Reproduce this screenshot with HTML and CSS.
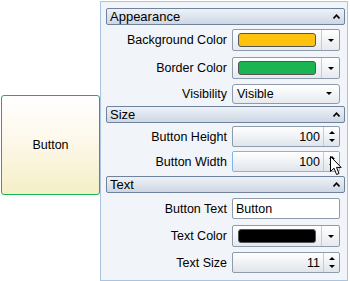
FILE: index.html
```html
<!DOCTYPE html>
<html lang="en">

<head>
    <meta charset="UTF-8">
    <title>Property Grid</title>
    <link rel="stylesheet" href="styles.css">
</head>

<body>
    <div class="stage">
        <div class="preview-col">
            <div class="preview">Button</div>
        </div>

        <div class="grid">
            <div class="group-header">
                <span>Appearance</span>
                <svg class="chevron" width="7" height="5" viewBox="0 0 7 5"><polyline points="0.5,4.5 3.5,1.2 6.5,4.5" fill="none" stroke="#000" stroke-width="1.6"/></svg>
            </div>
            <div class="row tall">
                <label>Background Color</label>
                <div class="combo color-combo">
                    <span class="swatch" style="background:#fdc20e"></span>
                    <span class="drop"><i class="tri-down"></i></span>
                </div>
            </div>
            <div class="row tall">
                <label>Border Color</label>
                <div class="combo color-combo">
                    <span class="swatch" style="background:#1ab552"></span>
                    <span class="drop"><i class="tri-down"></i></span>
                </div>
            </div>
            <div class="row short">
                <label>Visibility</label>
                <div class="combo select-combo">
                    <span class="value">Visible</span>
                    <i class="tri-down"></i>
                </div>
            </div>

            <div class="group-header">
                <span>Size</span>
                <svg class="chevron" width="7" height="5" viewBox="0 0 7 5"><polyline points="0.5,4.5 3.5,1.2 6.5,4.5" fill="none" stroke="#000" stroke-width="1.6"/></svg>
            </div>
            <div class="row">
                <label>Button Height</label>
                <div class="spin">
                    <span class="num">100</span>
                    <span class="spin-btns"><i class="tri-up"></i><i class="tri-down"></i></span>
                </div>
            </div>
            <div class="row">
                <label>Button Width</label>
                <div class="spin focused">
                    <span class="num">100</span>
                    <span class="spin-btns"><i class="tri-up"></i><i class="tri-down"></i></span>
                </div>
            </div>

            <div class="group-header text-group">
                <span>Text</span>
                <svg class="chevron" width="7" height="5" viewBox="0 0 7 5"><polyline points="0.5,4.5 3.5,1.2 6.5,4.5" fill="none" stroke="#000" stroke-width="1.6"/></svg>
            </div>
            <div class="row text-first">
                <label>Button Text</label>
                <div class="textbox">Button</div>
            </div>
            <div class="row wide">
                <label>Text Color</label>
                <div class="combo color-combo">
                    <span class="swatch" style="background:#000"></span>
                    <span class="drop"><i class="tri-down"></i></span>
                </div>
            </div>
            <div class="row short">
                <label>Text Size</label>
                <div class="spin">
                    <span class="num">11</span>
                    <span class="spin-btns"><i class="tri-up"></i><i class="tri-down"></i></span>
                </div>
            </div>

            <svg class="cursor" width="13" height="20" viewBox="0 0 13 20">
                <path d="M0.5,0.5 L0.5,15.5 L4,12.2 L6.6,18.5 L9,17.5 L6.5,11.4 L11.2,11.4 Z" fill="#fff" stroke="#000" stroke-width="1" stroke-linejoin="miter"/>
            </svg>
        </div>
    </div>
</body>

</html>
```

FILE: styles.css
```css
body {
    margin: 0;
    background: #fff;
    font-family: "Liberation Sans", Arial, sans-serif;
    font-size: 12.5px;
    color: #000;
}

.stage {
    display: flex;
    width: 350px;
    height: 281px;
}

.preview-col {
    padding-top: 95px;
    padding-left: 1px;
}

.preview {
    width: 99px;
    height: 100px;
    box-sizing: border-box;
    border: 1px solid #17b552;
    border-radius: 3px;
    background: linear-gradient(#ffffff 0%, #fdf8ea 45%, #f4efc6 100%);
    display: flex;
    align-items: center;
    justify-content: center;
}

.grid {
    position: relative;
    width: 248px;
    height: 280px;
    margin-top: 1px;
    box-sizing: border-box;
    border: 1px solid #a9c3e0;
    background: #f1f4f8;
    padding: 6px 2px 0 5px;
    display: flex;
    flex-direction: column;
}

.group-header {
    height: 17px;
    box-sizing: border-box;
    border: 1px solid #6f839c;
    border-radius: 2px;
    background: linear-gradient(#eef2f7, #cdd7e3);
    display: flex;
    align-items: center;
    justify-content: space-between;
    padding: 0 4px 0 3px;
    font-size: 13px;
}

.chevron {
    margin-bottom: 1px;
}

.row {
    height: 25px;
    display: grid;
    grid-template-columns: 1fr 108px;
    column-gap: 5px;
    align-items: center;
    padding-right: 5px;
}

.row.tall {
    height: 28px;
}

.row.short {
    height: 23px;
}

.row.wide {
    height: 30px;
}

.group-header + .row {
    margin-top: 1px;
}

.row + .group-header {
    margin-top: 1px;
}

.row + .text-group {
    margin-top: 2px;
}

.group-header + .text-first {
    margin-top: 3px;
}

label {
    text-align: right;
    white-space: nowrap;
}

.combo,
.spin,
.textbox {
    box-sizing: border-box;
    border: 1px solid #8e9bab;
    border-radius: 2px;
    display: flex;
    align-items: center;
}

.color-combo {
    height: 22px;
    background: linear-gradient(#ffffff, #e6eaee);
    padding-left: 5px;
}

.swatch {
    flex: 1;
    height: 12px;
    border: 1px solid #555;
    border-radius: 3px;
}

.drop {
    width: 17px;
    height: 100%;
    margin-left: 5px;
    border-left: 1px solid #c5ccd5;
    display: flex;
    align-items: center;
    justify-content: center;
}

.select-combo {
    height: 20px;
    background: linear-gradient(#ffffff, #e6eaee);
    justify-content: space-between;
    padding: 0 7px 0 4px;
    border-radius: 3px;
}

.tri-down,
.tri-up {
    width: 0;
    height: 0;
    border-left: 3px solid transparent;
    border-right: 3px solid transparent;
}

.tri-down {
    border-top: 3px solid #000;
}

.tri-up {
    border-bottom: 3px solid #000;
}

.spin {
    height: 21px;
    background: linear-gradient(#ffffff, #dfe5ec);
    justify-content: flex-end;
}

.spin.focused {
    border-color: #7fb6e4;
}

.num {
    padding-right: 3px;
}

.spin-btns {
    width: 15px;
    height: 100%;
    border-left: 1px solid #c5ccd5;
    display: flex;
    flex-direction: column;
    align-items: center;
    justify-content: center;
    gap: 5px;
}

.textbox {
    height: 21px;
    background: #fff;
    padding-left: 3px;
}

.cursor {
    position: absolute;
    left: 229px;
    top: 154px;
}
```
